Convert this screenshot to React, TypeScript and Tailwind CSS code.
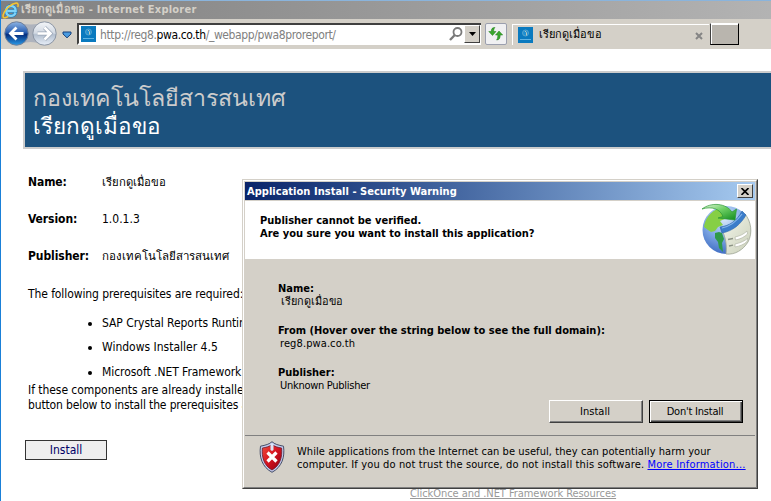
import type { ReactNode } from "react";

function IeLogo() {
  return (
    <svg width="18" height="17" viewBox="0 0 18 17" className="shrink-0">
      <path d="M13.600 10.200C13 12.600 11.300 13.900 9 13.900c-2.900 0-4.800-1.900-4.800-4.900S6.100 4 9 4c3 0 4.800 2 4.700 5H5.500" fill="none" stroke="#1677b8" strokeWidth="3.400" />
      <path d="M13.600 10.600C12.800 12.700 11.300 13.900 9 13.900c-2.900 0-4.800-1.900-4.800-4.900S6.100 4 9 4c3 0 4.800 2 4.700 5H5.500" fill="none" stroke="#7fd3f8" strokeWidth="2.300" />
      <path d="M15.800 5C16.800 2 15.800.8 13.400 1.200 9.500 1.900 4.500 6 2.200 10.300c-1.900 3.500-1.400 6 .9 5.500 1-.2 2-.8 3-1.500" fill="none" stroke="#f7c62f" strokeWidth="1.500" />
    </svg>
  );
}

function NavButtons() {
  return (
    <svg width="56" height="28" viewBox="0 0 56 28" className="shrink-0">
      <defs>
        <linearGradient id="back" x1="0" y1="0" x2="0" y2="1">
          <stop offset="0" stopColor="#8db4e4" />
          <stop offset=".45" stopColor="#2a5fb2" />
          <stop offset=".55" stopColor="#052e7e" />
          <stop offset="1" stopColor="#2a9be8" />
        </linearGradient>
        <linearGradient id="fwd" x1="0" y1="0" x2="0" y2="1">
          <stop offset="0" stopColor="#f3f5f8" />
          <stop offset=".48" stopColor="#d2d9e3" />
          <stop offset=".55" stopColor="#b3bfcf" />
          <stop offset="1" stopColor="#e8eff8" />
        </linearGradient>
      </defs>
      <path d="M12 2q15 5 29 0v23q-14-6-29 0z" fill="#aeb3bd" />
      <circle cx="12.500" cy="13.500" r="11.700" fill="url(#back)" stroke="#6f7f99" strokeWidth="1" />
      <circle cx="40.500" cy="13.500" r="11.700" fill="url(#fwd)" stroke="#8b95a4" strokeWidth="1" />
      <path d="M19.500 13.500H7M12.500 7.500l-6 6 6 6" fill="none" stroke="#fff" strokeWidth="2.800" />
      <path d="M33.500 13.500H46M40.500 7.500l6 6-6 6" fill="none" stroke="#9aa6b6" strokeWidth="4" />
      <path d="M33.500 13.500H46M40.500 7.500l6 6-6 6" fill="none" stroke="#fff" strokeWidth="2.600" />
    </svg>
  );
}

function SiteIcon() {
  return (
    <svg width="15" height="16" viewBox="0 0 15 16" className="shrink-0">
      <rect width="15" height="16" fill="#0a7abf" />
      <circle cx="7.500" cy="6" r="3" fill="#1f8fd0" stroke="#63a9cf" strokeWidth=".8" />
      <path d="M7 4l1.500 1.500v3" stroke="#b4c7c0" fill="none" />
      <path d="M2 12.500h11" stroke="#5fb3e2" strokeWidth="1" />
    </svg>
  );
}

function TitleBar() {
  return (
    <div className="flex h-[19px] items-center border-t border-[#8ab4dc] bg-linear-to-r from-[#808080] to-[#b3b3b3] pl-[1px] text-[11px] font-bold text-[#d4d0c8]">
      <IeLogo />
      <span className="ml-[1px] pt-[1px] text-[11px] tracking-[0.22px] whitespace-nowrap">
        <span className="text-[10.900px]">เรียกดูเมื่อขอ</span> - Internet Explorer
      </span>
    </div>
  );
}

function Toolbar() {
  return (
    <div className="flex h-[30px] bg-[#d4d0c8] pl-[3px]">
      <div className="pt-[1px]"><NavButtons /></div>
      <svg width="10" height="8" viewBox="0 0 10 8" className="mt-[12px] ml-[2px] shrink-0">
        <path d="M1 1h8v2L5 6.800 1 3z" fill="#4a9be0" stroke="#15417c" />
      </svg>
      <div className="mt-[4px] ml-[5px] flex h-[22px] w-[404px] items-center border-t-2 border-b-2 border-l-2 border-t-[#404040] border-b-white border-l-[#404040] bg-white pl-[2px]">
        <SiteIcon />
        <span className="ml-[4px] pt-[1px] text-[12px] tracking-[-0.38px] whitespace-nowrap text-[#808080]">
          http://reg8.<span className="text-black">pwa.co.th</span>/_webapp/pwa8proreport/
        </span>
        <svg width="14" height="14" viewBox="0 0 14 14" className="ml-auto shrink-0">
          <circle cx="8.500" cy="5" r="4" fill="none" stroke="#7a7a7a" strokeWidth="1.800" />
          <path d="M5.800 8L1 13" stroke="#7a7a7a" strokeWidth="2.400" />
        </svg>
        <div className="mr-[1px] ml-[1px] flex h-[18px] w-[16px] items-center justify-center border border-t-white border-r-[#404040] border-b-[#404040] border-l-white bg-[#d4d0c8]">
          <svg width="7" height="4" viewBox="0 0 7 4"><path d="M0 0h7L3.500 4z" /></svg>
        </div>
      </div>
      <div className="mt-[4px] ml-[4px] flex h-[22px] w-[22px] items-center justify-center rounded-[2px] border border-[#9b9fae] bg-[#f0f0f2]">
        <svg width="16" height="16" viewBox="0 0 16 16" className="shrink-0">
          <path d="M7 1.500C4 1.500 3.300 3 3.300 5.500H.8L4.500 9.500 8 5.500H5.700C5.700 3.500 6 2.500 7 1.500z" fill="#3aa82d" stroke="#1c7c17" strokeWidth=".5" />
          <path d="M8.500 14c3 0 3.700-2 3.700-5h2.500L11 5 7.500 9h2.300c0 2.500-.3 4-1.300 5z" fill="#3aa82d" stroke="#1c7c17" strokeWidth=".5" />
        </svg>
      </div>
      <div className="mt-[5px] ml-[5px] flex h-[21px] w-[197px] items-center border-t border-l border-white pl-[5px]">
        <SiteIcon />
        <span className="ml-[6px] pt-[1px] text-[11px] whitespace-nowrap text-black">เรียกดูเมื่อขอ</span>
        <svg width="8" height="8" viewBox="0 0 8 8" className="mt-[1px] mr-[6px] ml-auto shrink-0">
          <path d="M1 1l6 6M7 1L1 7" stroke="#858585" strokeWidth="2" />
        </svg>
      </div>
      <div className="mt-[4px] ml-[1px] h-[22px] w-[29px] border border-t-white border-r-black border-b-black border-l-[#404040] bg-[#b9b5ae] shadow-[inset_1px_1px_0_#fff]" />
    </div>
  );
}

function Field({ label, children }: { label: string; children: ReactNode }) {
  return (
    <div className="flex h-[37px] items-start">
      <b className="w-[74px] tracking-[-0.08px]">{label}</b>
      <span>{children}</span>
    </div>
  );
}

function Page() {
  return (
    <div className="flex flex-col pt-[22px] text-[12px] leading-[15px] whitespace-nowrap text-black">
      <div className="ml-[22px] h-[78px] border-2 border-r-0 border-[#ccc] bg-[#1c527e] pt-[10px] pl-[8px] text-[23.200px] leading-[29px]">
        <div className="text-[#ccc]">กองเทคโนโลยีสารสนเทศ</div>
        <div className="text-[22.500px] text-white">เรียกดูเมื่อขอ</div>
      </div>
      <div className="mt-[26px] ml-[27px]">
        <Field label="Name:"><span className="text-[11.300px]">เรียกดูเมื่อขอ</span></Field>
        <Field label="Version:">1.0.1.3</Field>
        <Field label="Publisher:"><span className="text-[11.500px]">กองเทคโนโลยีสารสนเทศ</span></Field>
        <div className="mt-[1px] tracking-[-0.09px]">The following prerequisites are required:</div>
        <ul className="mt-[14px] ml-[74px] list-disc">
          <li className="h-[24px] tracking-[-0.05px]">SAP Crystal Reports Runtime</li>
          <li className="h-[25px]">Windows Installer 4.5</li>
          <li className="h-[18px] tracking-[-0.05px]">Microsoft .NET Framework 4</li>
        </ul>
        <div className="tracking-[-0.05px]">If these components are already installed,</div>
        <div className="tracking-[-0.14px]">button below to install the prerequisites and</div>
      </div>
      <div className="mt-[27px] ml-[24px] flex h-[20px] w-[82px] items-center justify-center border border-[#333] bg-[#eee] text-[#006]">Install</div>
      <div className="mt-[26px] ml-[409px] text-[11px] tracking-[-0.06px] text-[#999] underline">ClickOnce and .NET Framework Resources</div>
    </div>
  );
}

function InstallGlobe() {
  return (
    <svg width="50" height="53" viewBox="0 0 50 53">
      <defs>
        <radialGradient id="sea" cx=".45" cy=".25" r=".75">
          <stop offset="0" stopColor="#dcebfb" />
          <stop offset=".5" stopColor="#86aee8" />
          <stop offset="1" stopColor="#416fc4" />
        </radialGradient>
        <linearGradient id="leaf" x1="0" y1="0" x2="1" y2="1">
          <stop offset="0" stopColor="#e3f6dc" />
          <stop offset=".45" stopColor="#6fd064" />
          <stop offset="1" stopColor="#0f8a1d" />
        </linearGradient>
        <linearGradient id="paper" x1="0" y1="0" x2="1" y2="1">
          <stop offset="0" stopColor="#f6f8ee" />
          <stop offset="1" stopColor="#c9cfb8" />
        </linearGradient>
      </defs>
      <circle cx="24.500" cy="28" r="24" fill="url(#sea)" />
      <path d="M2 25C3 17 9 9 16 7l5 4 4 5-7 3 3 4-5 2-3 4-4 1-3-2z" fill="#86cf45" />
      <path d="M13 31l4-1 3 1 2 6-2 4 1 9-4-4-1-6-3-4z" fill="#2f9a48" />
      <path d="M19 26c10 0 18-6 24-14 6 7 8 19 3 28-5 8-13 13-22 12 1-8 0-17-5-26z" fill="url(#paper)" stroke="#9fa694" strokeWidth=".8" />
      <path d="M18 25c9-1 17-6 22-16l4 4c-5 9-13 16-24 18z" fill="#3b7dca" stroke="#2b64aa" strokeWidth=".6" />
      <path d="M20 26c9-2 15-7 20-14" fill="none" stroke="#86b5ea" strokeWidth="1.200" />
      <path d="M33 35c5-1 9-3 12-6l.5 3c-3 3-7 5-12 6zM33 42c5-1 10-3 13-6l-1 3.500c-3 3-7 4.500-12 5.500z" fill="#fff" stroke="#b3b8a8" strokeWidth=".7" />
      <path d="M26 37.500l5-1M27 44l4-.8" stroke="#8c9386" strokeWidth="1.300" />
      <path d="M0 7C9 0 24 1 30 10l4.500-3L33 18l-17-2 5-1.500C18 7 10 4 0 7z" fill="url(#leaf)" stroke="#299632" strokeWidth=".7" />
    </svg>
  );
}

function Shield() {
  return (
    <svg width="28" height="32" viewBox="0 0 28 32" className="shrink-0">
      <defs>
        <linearGradient id="red" x1="0" y1="0" x2="1" y2="1">
          <stop offset="0" stopColor="#f04b3c" />
          <stop offset=".5" stopColor="#d51220" />
          <stop offset="1" stopColor="#8b0010" />
        </linearGradient>
      </defs>
      <path d="M14 .7c2.500 2.500 6.500 3.500 11.500 4.500C27 16 24 26 14 31.300 4 26 1 16 2.500 5.200 7.500 4.200 11.500 3.200 14 .7z" fill="#c3cdf0" stroke="#454c66" strokeWidth="1" />
      <path d="M14 3.500c2.500 2 6 3 9.600 3.500.9 9-1.500 17.500-9.600 22C5.900 24.500 3.500 16 4.400 7 8 6.500 11.500 5.500 14 3.500z" fill="url(#red)" stroke="#6c1b2b" strokeWidth=".8" />
      <path d="M12.500 2.500h3V9L14 10l-1.500-1z" fill="#dbe3f7" />
      <path d="M9.500 11.500l9 9m0-9l-9 9" stroke="#fff" strokeWidth="3.200" />
    </svg>
  );
}

function Detail({ label, children }: { label: string; children: ReactNode }) {
  return (
    <div className="h-[42px]">
      <b>{label}</b>
      <div className="pl-[2px]">{children}</div>
    </div>
  );
}

function Dialog() {
  return (
    <div className="absolute top-[179px] left-[241px] h-[310px] w-[516px] border border-t-[#d4d0c8] border-r-[#404040] border-b-[#404040] border-l-[#d4d0c8] text-[11px] leading-[13px] whitespace-nowrap text-black">
      <div className="flex h-full flex-col border border-t-white border-r-[#808080] border-b-[#808080] border-l-white bg-[#d4d0c8] p-[1px]">
        <div className="flex h-[18px] shrink-0 items-center justify-between bg-linear-to-r from-[#0a246a] to-[#a6caf0] pr-[2px] pl-[2px] font-bold text-white">
          <span className="tracking-[0.03px]">Application Install - Security Warning</span>
          <div className="flex h-[14px] w-[16px] items-center justify-center border border-t-white border-r-[#404040] border-b-[#404040] border-l-white bg-[#d4d0c8]">
            <svg width="8" height="7" viewBox="0 0 8 7"><path d="M.5 0l7 7m0-7l-7 7" stroke="#000" strokeWidth="1.600" /></svg>
          </div>
        </div>
        <div className="mt-[1px] flex h-[58px] shrink-0 justify-between bg-white pr-[3px] pl-[15px] font-bold">
          <div className="pt-[13px]">
            <div>Publisher cannot be verified.</div>
            <div>Are you sure you want to install this application?</div>
          </div>
          <div className="pt-[1px]"><InstallGlobe /></div>
        </div>
        <div className="mt-[23px] h-[118px] shrink-0 pl-[33px]">
          <Detail label="Name:"><span className="pl-[1px] text-[10.900px]">เรียกดูเมื่อขอ</span></Detail>
          <Detail label="From (Hover over the string below to see the full domain):"><span className="tracking-[0.1px]">reg8.pwa.co.th</span></Detail>
          <Detail label="Publisher:"><span className="tracking-[-0.28px]">Unknown Publisher</span></Detail>
        </div>
        <div className="flex h-[23px] shrink-0 justify-end gap-[6px] pr-[12px]">
          <div className="flex w-[94px] items-center justify-center border border-t-white border-r-[#404040] border-b-[#404040] border-l-white pr-[2px] shadow-[inset_-1px_-1px_0_#808080]">Install</div>
          <div className="flex w-[94px] items-center justify-center border border-black pr-[2px] tracking-[-0.22px] shadow-[inset_1px_1px_0_#fff,inset_-1px_-1px_0_#404040,inset_-2px_-2px_0_#808080]">Don't Install</div>
        </div>
        <div className="mt-[12px] flex shrink-0 border-t border-[#808080] pt-[5px] pl-[13px]">
          <Shield />
          <div className="pt-[4px] pl-[11px]">
            <div className="tracking-[0.075px]">While applications from the Internet can be useful, they can potentially harm your</div>
            <div className="tracking-[0.13px]">computer. If you do not trust the source, do not install this software. <span className="tracking-[0.2px] text-[#0000ff] underline">More Information...</span></div>
          </div>
        </div>
      </div>
    </div>
  );
}

export default function App() {
  return (
    <div className="relative h-[501px] w-[771px] overflow-hidden border-l border-[#1a80d8] bg-white font-['DejaVu_Sans_Condensed','DejaVu_Sans',sans-serif]">
      <TitleBar />
      <Toolbar />
      <Page />
      <Dialog />
    </div>
  );
}
